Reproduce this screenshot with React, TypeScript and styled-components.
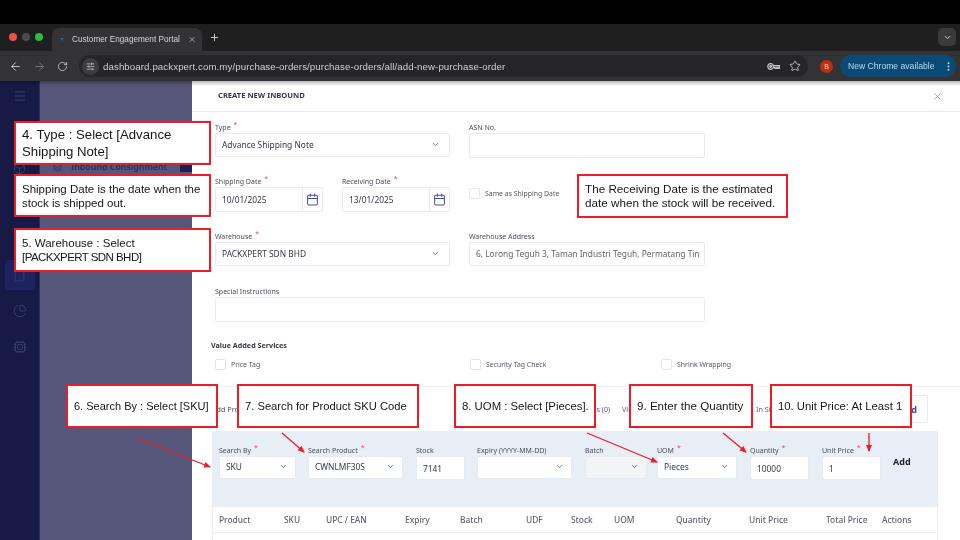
import React from "react";
import styled, { createGlobalStyle } from "styled-components";
import {
  ArrowLeft, ArrowRight, Box, Calendar, ChartPie, ChevronDown, Cpu, EllipsisVertical, Menu,
  Plus, RotateCw, SlidersHorizontal, Star, Tablet, Layers, X,
} from "lucide-react";

const Global = createGlobalStyle`
  html, body { margin: 0; padding: 0; background: #000; }
  * { box-sizing: border-box; }
`;

const Screen = styled.div`
  position: relative; width: 960px; height: 540px; overflow: hidden;
  display: flex; flex-direction: column; background: #000;
  font-family: "Noto Sans", sans-serif; filter: blur(0.3px);
`;
const TopBlack = styled.div`height: 24px; flex: none; background: #000;`;
const TabStrip = styled.div`
  height: 27px; flex: none; background: #1f1f1f; display: flex; align-items: flex-end; padding-left: 9px; position: relative;
`;
const Lights = styled.div`display: flex; gap: 5px; align-self: center; margin-top: -1px; width: 43px; flex: none;`;
const Light = styled.span<{ $c: string }>`width: 8px; height: 8px; border-radius: 50%; background: ${p => p.$c};`;
const Tab = styled.div`
  width: 150px; height: 23px; background: #333335; border-radius: 7px 7px 0 0; color: #d4d4d4;
  font: 8.2px "Liberation Sans", sans-serif; display: flex; align-items: center; padding: 0 6px 0 7px; gap: 8px;
`;
const TabTitle = styled.span`flex: 1; white-space: nowrap;`;
const Favicon = styled.span`width: 0; height: 0; margin-left: 1px; border-left: 2px solid transparent; border-right: 2px solid transparent; border-top: 3px solid #1b5fa8;`;
const NewTab = styled.span`color: #d8d8d8; display: flex; margin-left: 7px; align-self: center;`;
const TabMenu = styled.span`
  position: absolute; right: 4px; top: 4px; width: 18px; height: 18px; border-radius: 5px;
  background: #3a3a3a; color: #ddd; display: flex; align-items: center; justify-content: center;
`;
const Toolbar = styled.div`
  height: 30px; flex: none; background: #333335; display: flex; align-items: center; padding: 0 5px 0 9px; color: #c8c8c8;
`;
const NavGroup = styled.div`display: flex; gap: 11px; width: 70px; flex: none; align-items: center;`;
const Dim = styled.span`display: flex; color: #777;`;
const Lit = styled.span`display: flex; color: #c8c8c8;`;
const UrlPill = styled.div`
  width: 729px; height: 22px; flex: none; background: #262628; border-radius: 11px;
  display: flex; align-items: center; padding: 0 9px 0 3px; color: #d0d0d0;
  font: 9.7px "Liberation Sans", sans-serif; letter-spacing: .09px;
`;
const TuneDot = styled.span`
  width: 17px; height: 17px; border-radius: 50%; background: #3d3d3f; display: flex;
  align-items: center; justify-content: center; margin-right: 4px; color: #ddd;
`;
const UrlText = styled.span`flex: 1; white-space: nowrap;`;
const UrlIcons = styled.span`display: flex; align-items: center; gap: 9px; margin-right: -2px;`;
const Avatar = styled.span`
  width: 13px; height: 13px; border-radius: 50%; background: #bf2f14; color: #f0d5cc; margin-left: 12px;
  font: 7px "Liberation Sans", sans-serif; display: flex; align-items: center; justify-content: center; flex: none;
`;
const Update = styled.div`
  width: 116px; height: 22px; margin-left: 7px; flex: none; border-radius: 11px; background: #0b4a75; color: #b4dbf6;
  font: 8.6px "Liberation Sans", sans-serif; display: flex; align-items: center; justify-content: space-between; padding: 0 2px 0 8px; white-space: nowrap;
`;

const AppBody = styled.div`
  flex: 1; display: flex; min-height: 0; position: relative;
  &::after {
    content: ""; position: absolute; left: 0; right: 0; top: 0; height: 5px;
    background: linear-gradient(rgba(0,0,0,.28), rgba(0,0,0,0));
  }
`;
const Sidebar = styled.aside`
  width: 40px; flex: none; background: #161a45; display: flex; flex-direction: column; align-items: center; color: #3d4270; padding-top: 8px;
  border-right: 1px solid #2b2f5e;
`;
const SideSlot = styled.div<{ $mt: number; $on?: boolean }>`
  margin-top: ${p => p.$mt}px; width: 30px; height: 30px; border-radius: 3px; display: flex; align-items: center; justify-content: center; flex: none;
  background: ${p => (p.$on ? "#1c2360" : "transparent")};
`;
const Backdrop = styled.div`
  width: 152px; flex: none; background: #55567a; padding: 80px 0 0 13px;
  display: flex; align-items: flex-start;
`;
const MenuRow = styled.div`
  display: flex; align-items: center; gap: 9px; width: 100%; color: #2c2f60;
  font-size: 8.8px; font-weight: 600; white-space: nowrap;
`;
const MenuBadge = styled.span`width: 12px; height: 9px; background: #1e2150; border-radius: 1px; margin-left: auto;`;

const Panel = styled.main`flex: 1; background: #fff; display: flex; flex-direction: column; min-width: 0; color: #3f4254;`;
const PanelHead = styled.header`
  height: 31px; flex: none; border-bottom: 1px solid #e6eaf2; display: flex; align-items: center; justify-content: space-between;
  padding: 0 17px 3px 26px; font-size: 7.6px; font-weight: 700; color: #34374a;
`;
const Close = styled.span`display: flex; color: #7f86c8; margin-top: 4px;`;

const Form = styled.div`padding: 10px 0 0 23px; display: flex; flex-direction: column; flex: none;`;
const Row = styled.div<{ $h: number }>`display: flex; gap: 19px; height: ${p => p.$h}px; flex: none;`;
const Field = styled.div<{ $w: number }>`width: ${p => p.$w}px; flex: none; display: flex; flex-direction: column;`;
const Label = styled.label`
  display: block; height: 11px; font-size: 7px; line-height: 11px; color: #4b4e60; white-space: nowrap;
`;
const Req = styled.sup`color: #f1416c; font-size: 7px; line-height: 0; margin-left: 3px; vertical-align: 3px;`;
const Control = styled.div<{ $h?: number; $muted?: boolean; $disabled?: boolean }>`
  height: ${p => p.$h ?? 24}px; border: 1px solid #e4ebf3; border-radius: 2px;
  background: ${p => (p.$disabled ? "#f3f4f6" : "#fff")}; display: flex; align-items: center; justify-content: space-between;
  padding: 0 9px 2px 6px; font-size: 8.4px; color: ${p => (p.$muted ? "#62646f" : "#36384c")}; white-space: nowrap; overflow: hidden;
`;
const DateRowInner = styled.div`display: flex; gap: 19px;`;
const DateControl = styled(Control)`padding: 0 0 0 6px;`;
const DateIcon = styled.span`
  width: 20px; height: 100%; border-left: 1.5px solid #e4ebf3; display: flex; align-items: center; justify-content: center; color: #3f52a6; flex: none;
`;
const Check = styled.span`width: 11px; height: 11px; border: 1px solid #dfe6f0; border-radius: 2px; background: #fff; flex: none;`;
const CheckLabel = styled.label`
  display: flex; align-items: center; gap: 5px; font-size: 6.9px; color: #575a69; white-space: nowrap;
`;
const SameDate = styled(CheckLabel)`margin-top: 12px; align-self: flex-start;`;
const SectionTitle = styled.div`font-size: 7.2px; font-weight: 700; color: #34374a; margin-left: -4px; height: 14px; line-height: 14px;`;
const ChecksRow = styled.div`display: flex; margin-top: 7px; height: 12px;`;
const CheckSlot = styled.div<{ $w: number }>`width: ${p => p.$w}px; flex: none;`;

const Divider = styled.div`height: 1px; background: #eceff4; margin-top: 15px; flex: none;`;
const TabsRow = styled.div`
  height: 44px; flex: none; display: flex; align-items: center; font-size: 7.2px; padding-left: 20px; white-space: nowrap;
`;
const TabLink = styled.span<{ $w: number; $dark?: boolean }>`width: ${p => p.$w}px; flex: none; color: ${p => (p.$dark ? "#4b4e60" : "#4a5ab0")};`;
const OutlineBtn = styled.span`
  height: 28px; width: 52px; border: 1px solid #e4ebf3; border-radius: 2px; display: flex; align-items: center; justify-content: flex-end;
  padding-right: 10px; color: #35459c; font-weight: 700; font-size: 9px; flex: none;
`;
const Wrap = styled.div`
  margin-left: 20px; width: 726px; flex: 1; min-height: 0;
  border-left: 1px solid #eef1f6; border-right: 1px solid #eef1f6;
`;
const SearchPanel = styled.div`
  height: 76px; margin: 0 -1px; background: #e8eef5; display: flex; padding: 14px 0 0 7px; border-radius: 2px 2px 0 0;
`;
const Cell = styled.div<{ $w: number; $ml?: number }>`width: ${p => p.$w}px; flex: none; margin-left: ${p => p.$ml ?? 0}px;`;
const MiniSelect = styled(Control)`padding: 0 7px 2px 6px;`;
const MiniInput = styled(Control)`padding: 0 7px 0 6px;`;
const AddText = styled.span`font-size: 9px; font-weight: 700; color: #1f2030; margin-left: 12px; margin-top: 10px; flex: none;`;
const Thead = styled.div`
  height: 26px; display: grid; align-items: center; border-bottom: 1px solid #eef1f6; font-size: 8.4px; font-weight: 500; color: #62646f; white-space: nowrap;
  grid-template-columns: 65px 42px 79px 55px 66px 45px 43px 62px 73px 77px 56px auto; padding-left: 6px;
`;
const Tcell = styled.span``;

const Callout = styled.div<{ $x: number; $y: number; $w: number; $h: number; $size?: number; $lh?: number }>`
  position: absolute; left: ${p => p.$x}px; top: ${p => p.$y}px; width: ${p => p.$w}px; height: ${p => p.$h}px;
  background: #fff; border: 2px solid #ee1c25; color: #16161c; display: flex; align-items: center; padding: 0 6px; white-space: nowrap;
  font-family: "Liberation Sans", sans-serif; font-size: ${p => p.$size ?? 11.7}px; line-height: ${p => p.$lh ?? 14}px;
`;
const Tight = styled.span`letter-spacing: -0.55px;`;
const Arrows = styled.svg`position: absolute; left: 0; top: 0; pointer-events: none;`;

const arrows = [
  [137, 438, 210, 467],
  [282, 433, 304, 452],
  [587, 433, 657, 462],
  [723, 433, 746, 452],
  [869, 433, 869, 451],
];
const heads = ["Product", "SKU", "UPC / EAN", "Expiry", "Batch", "UDF", "Stock", "UOM", "Quantity", "Unit Price", "Total Price", "Actions"];

const Chev = () => <ChevronDown size={9} strokeWidth={2} color="#4b5388" />;
const KeyIcon = () => (
  <svg width="13" height="9" viewBox="0 0 13 9" fill="none" stroke="#c8c8c8" strokeWidth="1.2">
    <circle cx="3.6" cy="4.5" r="2.8" />
    <circle cx="3.6" cy="4.5" r=".8" fill="#c8c8c8" />
    <path d="M6.4 3.6h6v2.8h-1.5v-1h-1v1H8V5.4H6.4" />
  </svg>
);

export default function App() {
  return (
    <Screen>
      <Global />
      <TopBlack />
      <TabStrip>
        <Lights>
          <Light $c="#ee4f47" />
          <Light $c="#4b4b4b" />
          <Light $c="#2fb843" />
        </Lights>
        <Tab>
          <Favicon />
          <TabTitle>Customer Engagement Portal</TabTitle>
          <X size={9} strokeWidth={2} />
        </Tab>
        <NewTab><Plus size={11} strokeWidth={2} /></NewTab>
        <TabMenu><ChevronDown size={9} strokeWidth={2.4} /></TabMenu>
      </TabStrip>
      <Toolbar>
        <NavGroup>
          <Lit><ArrowLeft size={13} strokeWidth={1.8} /></Lit>
          <Dim><ArrowRight size={13} strokeWidth={1.8} /></Dim>
          <Lit><RotateCw size={11} strokeWidth={1.8} /></Lit>
        </NavGroup>
        <UrlPill>
          <TuneDot><SlidersHorizontal size={9} strokeWidth={1.8} /></TuneDot>
          <UrlText>dashboard.packxpert.com.my/purchase-orders/purchase-orders/all/add-new-purchase-order</UrlText>
          <UrlIcons>
            <KeyIcon />
            <Star size={12} strokeWidth={1.7} />
          </UrlIcons>
        </UrlPill>
        <Avatar>B</Avatar>
        <Update>New Chrome available <EllipsisVertical size={11} strokeWidth={2.2} /></Update>
      </Toolbar>
      <AppBody>
        <Sidebar>
          <Menu size={14} strokeWidth={1.6} />
          <SideSlot $mt={50}><Box size={13} strokeWidth={1.6} /></SideSlot>
          <SideSlot $mt={77} $on><Tablet size={13} strokeWidth={1.6} /></SideSlot>
          <SideSlot $mt={6}><ChartPie size={14} strokeWidth={1.6} /></SideSlot>
          <SideSlot $mt={6}><Cpu size={14} strokeWidth={1.6} /></SideSlot>
        </Sidebar>
        <Backdrop>
          <MenuRow>
            <Layers size={9} strokeWidth={1.8} />
            Inbound Consignment
            <MenuBadge />
          </MenuRow>
        </Backdrop>
        <Panel>
          <PanelHead>
            CREATE NEW INBOUND
            <Close><X size={11} strokeWidth={1.6} /></Close>
          </PanelHead>
          <Form>
            <Row $h={54}>
              <Field $w={235}>
                <Label>Type<Req>*</Req></Label>
                <Control>Advance Shipping Note <Chev /></Control>
              </Field>
              <Field $w={236}>
                <Label>ASN No.</Label>
                <Control $h={25} />
              </Field>
            </Row>
            <Row $h={55}>
              <DateRowInner>
                <Field $w={108}>
                  <Label>Shipping Date<Req>*</Req></Label>
                  <DateControl $h={25}>10/01/2025<DateIcon><Calendar size={13} strokeWidth={1.9} /></DateIcon></DateControl>
                </Field>
                <Field $w={108}>
                  <Label>Receiving Date<Req>*</Req></Label>
                  <DateControl $h={25}>13/01/2025<DateIcon><Calendar size={13} strokeWidth={1.9} /></DateIcon></DateControl>
                </Field>
              </DateRowInner>
              <SameDate><Check />Same as Shipping Date</SameDate>
            </Row>
            <Row $h={55}>
              <Field $w={235}>
                <Label>Warehouse<Req>*</Req></Label>
                <Control>PACKXPERT SDN BHD <Chev /></Control>
              </Field>
              <Field $w={236}>
                <Label>Warehouse Address</Label>
                <Control $muted>6, Lorong Teguh 3, Taman Industri Teguh, Permatang Tin</Control>
              </Field>
            </Row>
            <Row $h={52}>
              <Field $w={490}>
                <Label>Special Instructions</Label>
                <Control $h={25} />
              </Field>
            </Row>
            <SectionTitle>Value Added Services</SectionTitle>
            <ChecksRow>
              <CheckSlot $w={255}><CheckLabel><Check />Price Tag</CheckLabel></CheckSlot>
              <CheckSlot $w={191}><CheckLabel><Check />Security Tag Check</CheckLabel></CheckSlot>
              <CheckSlot $w={200}><CheckLabel><Check />Shrink Wrapping</CheckLabel></CheckSlot>
            </ChecksRow>
          </Form>
          <Divider />
          <TabsRow>
            <TabLink $w={358} $dark>Add Products</TabLink>
            <TabLink $w={52}>Products (0)</TabLink>
            <TabLink $w={134}>View Products</TabLink>
            <TabLink $w={120}>In Stock</TabLink>
            <OutlineBtn>Add</OutlineBtn>
          </TabsRow>
          <Wrap>
            <SearchPanel>
              <Cell $w={77}>
                <Label>Search By<Req>*</Req></Label>
                <MiniSelect $h={23}>SKU <Chev /></MiniSelect>
              </Cell>
              <Cell $w={95} $ml={12}>
                <Label>Search Product<Req>*</Req></Label>
                <MiniSelect $h={23}>CWNLMF30S <Chev /></MiniSelect>
              </Cell>
              <Cell $w={49} $ml={13}>
                <Label>Stock</Label>
                <MiniInput>7141</MiniInput>
              </Cell>
              <Cell $w={95} $ml={12}>
                <Label>Expiry (YYYY-MM-DD)</Label>
                <MiniSelect $h={23}><span /> <Chev /></MiniSelect>
              </Cell>
              <Cell $w={62} $ml={13}>
                <Label>Batch</Label>
                <MiniSelect $h={23} $disabled><span /> <Chev /></MiniSelect>
              </Cell>
              <Cell $w={80} $ml={10}>
                <Label>UOM<Req>*</Req></Label>
                <MiniSelect $h={23}>Pieces <Chev /></MiniSelect>
              </Cell>
              <Cell $w={59} $ml={13}>
                <Label>Quantity<Req>*</Req></Label>
                <MiniInput>10000</MiniInput>
              </Cell>
              <Cell $w={59} $ml={13}>
                <Label>Unit Price<Req>*</Req></Label>
                <MiniInput>1</MiniInput>
              </Cell>
              <AddText>Add</AddText>
            </SearchPanel>
            <Thead>
              {heads.map(h => <Tcell key={h}>{h}</Tcell>)}
            </Thead>
          </Wrap>
        </Panel>
      </AppBody>

      <Callout $x={14} $y={121} $w={197} $h={44} $size={13.2} $lh={17}><span>4. Type : Select [Advance<br />Shipping Note]</span></Callout>
      <Callout $x={14} $y={174} $w={197} $h={43} $size={11.5}><span>Shipping Date is the date when the<br />stock is shipped out.</span></Callout>
      <Callout $x={14} $y={228} $w={197} $h={44} $size={11.5}><span>5. Warehouse : Select<br /><Tight>[PACKXPERT SDN BHD]</Tight></span></Callout>
      <Callout $x={577} $y={174} $w={211} $h={44}><span>The Receiving Date is the estimated<br />date when the stock will be received.</span></Callout>
      <Callout $x={66} $y={384} $w={152} $h={44} $size={11}>6. Search By : Select [SKU]</Callout>
      <Callout $x={237} $y={384} $w={182} $h={44} $size={11.2}>7. Search for Product SKU Code</Callout>
      <Callout $x={454} $y={384} $w={142} $h={44} $size={11.35}>8. UOM : Select [Pieces].</Callout>
      <Callout $x={629} $y={384} $w={124} $h={44} $size={11.6}>9. Enter the Quantity</Callout>
      <Callout $x={770} $y={384} $w={142} $h={44} $size={11.3}>10. Unit Price: At Least 1</Callout>

      <Arrows width="960" height="540" viewBox="0 0 960 540">
        <defs>
          <marker id="ah" markerWidth="7" markerHeight="6" refX="6" refY="3" orient="auto" markerUnits="userSpaceOnUse">
            <path d="M0 0L7 3L0 6Z" fill="#ee1c25" />
          </marker>
        </defs>
        {arrows.map(([a, b, c, d]) => (
          <line key={a} x1={a} y1={b} x2={c} y2={d} stroke="#ee1c25" strokeWidth="1.3" markerEnd="url(#ah)" />
        ))}
      </Arrows>
    </Screen>
  );
}
